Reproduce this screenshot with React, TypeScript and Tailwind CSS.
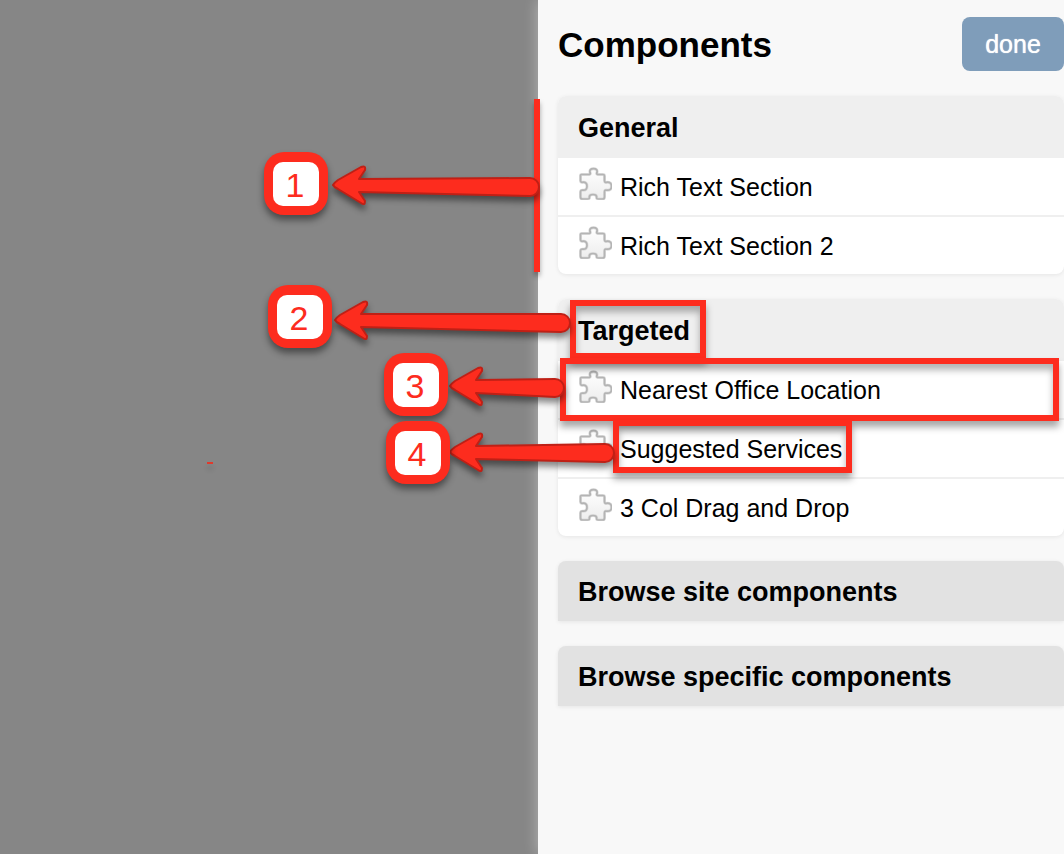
import React from "react";

const PUZZLE =
  "M2.5 8.5 Q2.5 7.5 3.5 7.5 H10.5 Q13 7.5 12 5.5 Q11.2 1.7 15.5 1.7 Q19.8 1.7 19 5.5 Q18 7.5 20.5 7.5 H25 Q26.5 7.5 26.5 9 V13.5 Q26.5 16 29 15.2 Q33.5 15 33.5 19.2 Q33.5 23.5 29 23.2 Q26.5 22.5 26.5 25 V30 Q26.5 32 24.5 32 H20.5 Q18.2 32 18.7 30 Q18.7 27.5 15 27.5 Q11.3 27.5 11.3 30 Q11.8 32 9.5 32 H4.5 Q2.5 32 2.5 30 V25 Q2.5 22.8 5 23.2 Q9 23.5 9 19.2 Q9 15 5 15.2 Q2.5 15.7 2.5 13.5 Z";

function PuzzleIcon() {
  return (
    <svg className="h-[34px] w-[34px] shrink-0" viewBox="0 -1 34 34" aria-hidden="true">
      <defs>
        <linearGradient id="puzzle-fill" x1="0" y1="0" x2="0" y2="1">
          <stop offset="0" stopColor="#ffffff" />
          <stop offset="1" stopColor="#ededed" />
        </linearGradient>
      </defs>
      <path d={PUZZLE} fill="url(#puzzle-fill)" stroke="#dedede" strokeWidth="3" strokeLinejoin="round" />
      <path d={PUZZLE} fill="none" stroke="#b4b4b4" strokeWidth="1.7" strokeLinejoin="round" />
    </svg>
  );
}

function Group({ title, items }: { title: string; items: string[] }) {
  return (
    <section className="overflow-hidden rounded-lg bg-white shadow-[0_1px_4px_rgba(0,0,0,0.08)]">
      <h2 className="flex h-[62px] items-center bg-[#efefef] px-5 pt-0.5 text-[27px] font-bold">{title}</h2>
      <ul className="divide-y-2 divide-[#efefef]">
        {items.map((item) => (
          <li key={item} className="flex h-[59px] items-start gap-2 px-5 pt-2 text-[25px] last:h-[57px]">
            <PuzzleIcon />
            <span className="pt-1 leading-[34px]">{item}</span>
          </li>
        ))}
      </ul>
    </section>
  );
}

function BrowseButton({ label }: { label: string }) {
  return (
    <button
      type="button"
      className="flex h-[60px] items-center rounded-t-lg bg-[#e2e2e2] px-5 pt-0.5 text-left text-[27px] font-bold shadow-[0_1px_4px_rgba(0,0,0,0.08)]"
    >
      {label}
    </button>
  );
}

type ArrowProps = { x: number; y: number; tailX: number; tailY: number };

function Arrow({ x, y, tailX, tailY }: ArrowProps) {
  const r = 9;
  const d = [
    `M${x} ${y} Q${x + 2} ${y - 3} ${x + 5} ${y - 5}`,
    `L${x + 28} ${y - 18} Q${x + 33} ${y - 20} ${x + 32} ${y - 15}`,
    `L${x + 26} ${y - 6} L${tailX} ${tailY - r}`,
    `A${r} ${r} 0 0 1 ${tailX} ${tailY + r}`,
    `L${x + 26} ${y + 7} L${x + 32} ${y + 16} Q${x + 32} ${y + 21} ${x + 28} ${y + 18}`,
    `L${x + 5} ${y + 4} Q${x + 1} ${y + 2} ${x} ${y} Z`,
  ].join(" ");
  return <path d={d} fill="#fd2c1e" stroke="#bf2016" strokeWidth="2" strokeLinejoin="round" />;
}

function Badge({ n, place }: { n: number; place: string }) {
  return (
    <span
      className={`absolute flex h-[63px] w-16 items-center justify-center rounded-[20px] bg-[#fd2c1e] shadow-[0_5px_7px_rgba(0,0,0,0.45)] ${place}`}
    >
      <span className="flex h-11 w-[46px] items-center justify-center rounded-[10px] bg-white pr-0.5 pt-0.5 text-[34px] leading-none text-[#fd2c1e]">
        {n}
      </span>
    </span>
  );
}

function Frame({ place }: { place: string }) {
  return (
    <div
      className={`absolute border-[6px] border-[#fd2c1e] shadow-[0_6px_7px_rgba(0,0,0,0.35),inset_0_6px_7px_rgba(0,0,0,0.3)] ${place}`}
    />
  );
}

function Annotations() {
  return (
    <div className="pointer-events-none absolute inset-0 overflow-hidden">
      <div className="absolute left-[534px] top-[99px] h-[173px] w-[6px] bg-[#fd2c1e] shadow-[0_4px_5px_rgba(0,0,0,0.35)]" />
      <div className="absolute left-[207px] top-[462px] h-[2px] w-[6px] bg-[#e03a2c] shadow-[0_5px_5px_rgba(0,0,0,0.2)]" />
      <Frame place="left-[570px] top-[300px] h-[59px] w-[136px]" />
      <Frame place="left-[560px] right-[5px] top-[358px] h-[63px]" />
      <Frame place="left-[613px] top-[420px] h-[53px] w-[239px]" />
      <svg className="absolute inset-0 h-full w-full drop-shadow-[0_5px_3px_rgba(0,0,0,0.45)]" aria-hidden="true">
        <Arrow x={333} y={185} tailX={530} tailY={187} />
        <Arrow x={335} y={320} tailX={561} tailY={323} />
        <Arrow x={450} y={386} tailX={555} tailY={388} />
        <Arrow x={450} y={452} tailX={605} tailY={453} />
      </svg>
      <Badge n={1} place="left-[264px] top-[152px]" />
      <Badge n={2} place="left-[268px] top-[285px]" />
      <Badge n={3} place="left-[384px] top-[353px]" />
      <Badge n={4} place="left-[386px] top-[421px]" />
    </div>
  );
}

export default function App() {
  return (
    <div className="relative flex min-h-screen bg-[#868686] font-['Liberation_Sans',Arial,sans-serif] text-black">
      <div className="w-[538px] shrink-0" />
      <main className="flex-1 bg-[#f8f8f8] pl-5 shadow-[0_0_14px_rgba(255,255,255,0.4)]">
        <header className="flex items-center justify-between pb-[25px] pt-[17px]">
          <h1 className="text-[35px] font-bold leading-none">Components</h1>
          <button
            type="button"
            className="h-[54px] w-[102px] rounded-lg bg-[#7f9dba] pt-0.5 text-[25px] text-white [text-shadow:0_0_1px_#fff]"
          >
            done
          </button>
        </header>
        <div className="flex flex-col gap-[25px]">
          <Group title="General" items={["Rich Text Section", "Rich Text Section 2"]} />
          <Group title="Targeted" items={["Nearest Office Location", "Suggested Services", "3 Col Drag and Drop"]} />
          <BrowseButton label="Browse site components" />
          <BrowseButton label="Browse specific components" />
        </div>
      </main>
      <Annotations />
    </div>
  );
}
